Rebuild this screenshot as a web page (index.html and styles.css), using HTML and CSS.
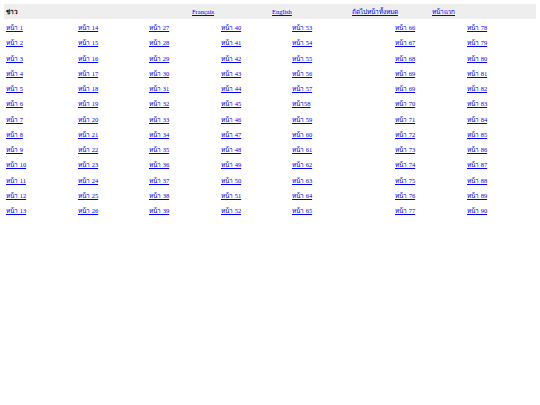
FILE: index.html
```html
<!DOCTYPE html>
<html lang="th">
<head>
<meta charset="utf-8">
<link rel="stylesheet" href="styles.css">
</head>
<body>
<div class="topbar">
  <span class="title">ข่าว</span>
  <a href="#">Français</a>
  <a href="#">English</a>
  <a href="#">ถัดไปหน้าทั้งหมด</a>
  <a href="#">หน้าแรก</a>
</div>
<div class="pages">
  <a href="#">หน้า 1</a><a href="#">หน้า 14</a><a href="#">หน้า 27</a><a href="#">หน้า 40</a><a href="#">หน้า 53</a><a href="#">หน้า 66</a><a href="#">หน้า 78</a>
  <a href="#">หน้า 2</a><a href="#">หน้า 15</a><a href="#">หน้า 28</a><a href="#">หน้า 41</a><a href="#">หน้า 54</a><a href="#">หน้า 67</a><a href="#">หน้า 79</a>
  <a href="#">หน้า 3</a><a href="#">หน้า 16</a><a href="#">หน้า 29</a><a href="#">หน้า 42</a><a href="#">หน้า 55</a><a href="#">หน้า 68</a><a href="#">หน้า 80</a>
  <a href="#">หน้า 4</a><a href="#">หน้า 17</a><a href="#">หน้า 30</a><a href="#">หน้า 43</a><a href="#">หน้า 56</a><a href="#">หน้า 69</a><a href="#">หน้า 81</a>
  <a href="#">หน้า 5</a><a href="#">หน้า 18</a><a href="#">หน้า 31</a><a href="#">หน้า 44</a><a href="#">หน้า 57</a><a href="#">หน้า 69</a><a href="#">หน้า 82</a>
  <a href="#">หน้า 6</a><a href="#">หน้า 19</a><a href="#">หน้า 32</a><a href="#">หน้า 45</a><a href="#">หน้า58</a><a href="#">หน้า 70</a><a href="#">หน้า 83</a>
  <a href="#">หน้า 7</a><a href="#">หน้า 20</a><a href="#">หน้า 33</a><a href="#">หน้า 46</a><a href="#">หน้า 59</a><a href="#">หน้า 71</a><a href="#">หน้า 84</a>
  <a href="#">หน้า 8</a><a href="#">หน้า 21</a><a href="#">หน้า 34</a><a href="#">หน้า 47</a><a href="#">หน้า 60</a><a href="#">หน้า 72</a><a href="#">หน้า 85</a>
  <a href="#">หน้า 9</a><a href="#">หน้า 22</a><a href="#">หน้า 35</a><a href="#">หน้า 48</a><a href="#">หน้า 61</a><a href="#">หน้า 73</a><a href="#">หน้า 86</a>
  <a href="#">หน้า 10</a><a href="#">หน้า 23</a><a href="#">หน้า 36</a><a href="#">หน้า 49</a><a href="#">หน้า 62</a><a href="#">หน้า 74</a><a href="#">หน้า 87</a>
  <a href="#">หน้า 11</a><a href="#">หน้า 24</a><a href="#">หน้า 37</a><a href="#">หน้า 50</a><a href="#">หน้า 63</a><a href="#">หน้า 75</a><a href="#">หน้า 88</a>
  <a href="#">หน้า 12</a><a href="#">หน้า 25</a><a href="#">หน้า 38</a><a href="#">หน้า 51</a><a href="#">หน้า 64</a><a href="#">หน้า 76</a><a href="#">หน้า 89</a>
  <a href="#">หน้า 13</a><a href="#">หน้า 26</a><a href="#">หน้า 39</a><a href="#">หน้า 52</a><a href="#">หน้า 65</a><a href="#">หน้า 77</a><a href="#">หน้า 90</a>
</div>
</body>
</html>
```
FILE: styles.css
```css
html, body {
  background: #ffffff;
}
body {
  margin: 4px;
  font-family: "Liberation Serif", serif;
  font-size: 6.5px;
  color: #000;
}
a {
  color: #0000ee;
  text-decoration: underline;
}
.topbar {
  display: grid;
  grid-template-columns: 186px 80px 80px 80px 1fr;
  align-items: center;
  height: 15px;
  background: #eeeeee;
  padding-left: 2px;
}
.title {
  font-weight: bold;
  font-size: 6.5px;
}
.pages {
  display: grid;
  grid-template-columns: 72px 71px 72px 71px 103px 72px 1fr;
  grid-auto-rows: 15.25px;
  align-items: center;
  margin-top: 1.5px;
  padding-left: 2px;
}
.pages a {
  justify-self: start;
}
```
